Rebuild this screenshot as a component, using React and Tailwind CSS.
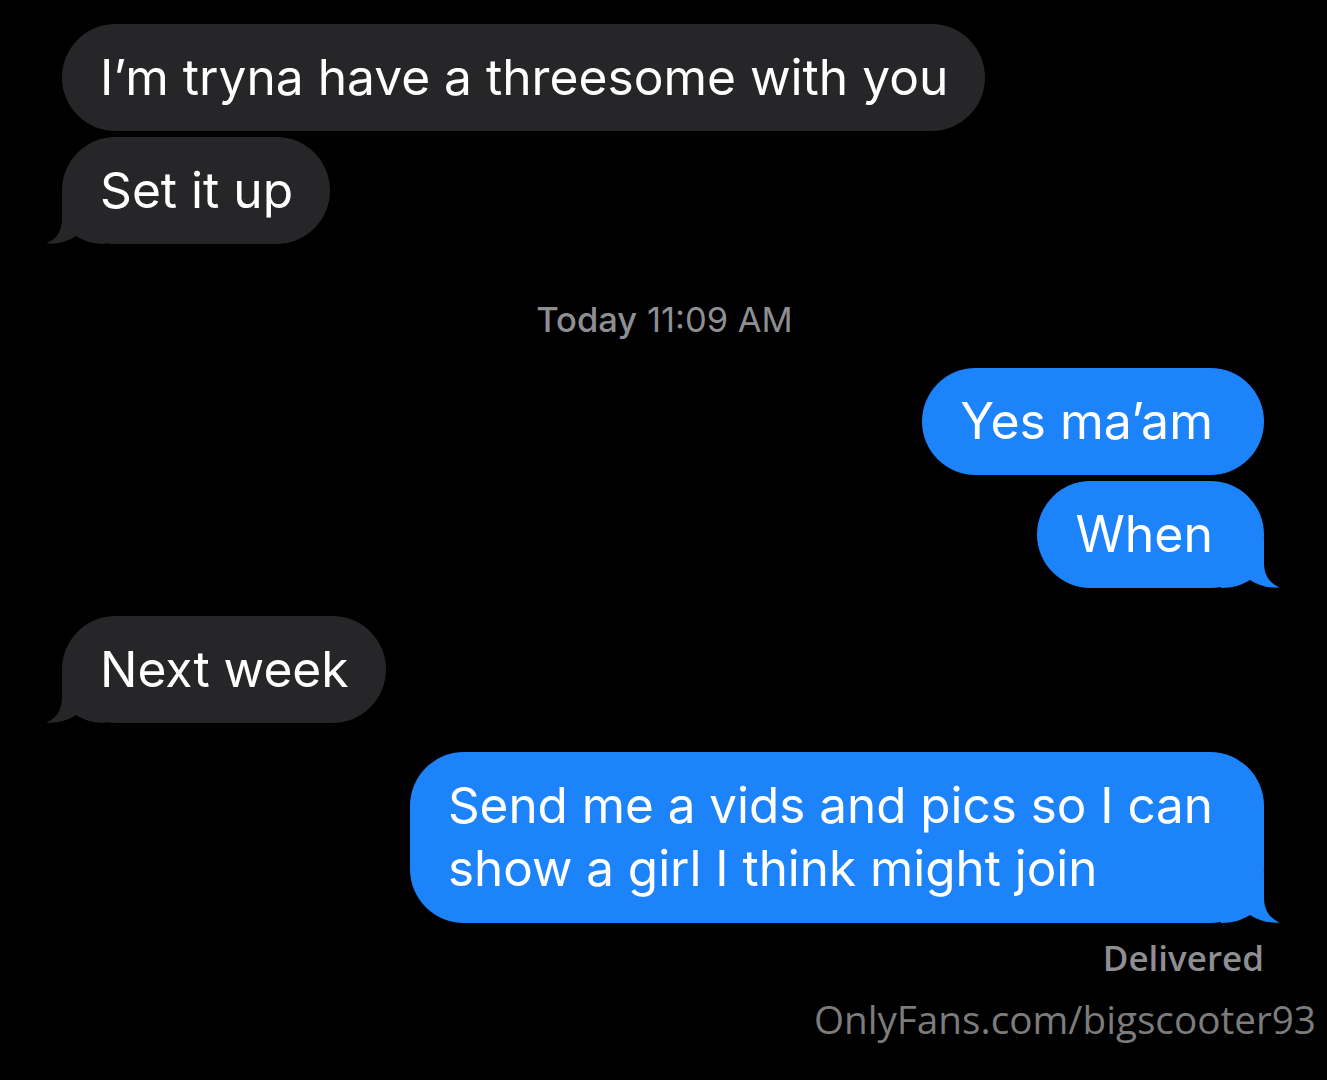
import React from "react";

const SF = { fontFamily: "Inter, 'Noto Sans', sans-serif" };

function TailLeft({ color }) {
  return (
    <svg
      className="absolute left-[-17px] bottom-0"
      width="60"
      height="50"
      viewBox="0 0 60 50"
    >
      <path
        d="M17,0 L17,24 C17,37 12,45 1,49.6 C12,50.4 23,47.5 31,42 C39,47 48,50 60,50 L60,0 Z"
        fill={color}
      />
    </svg>
  );
}

function TailRight({ color }) {
  return (
    <svg
      className="absolute right-[-17px] bottom-0"
      width="60"
      height="50"
      viewBox="0 0 60 50"
      style={{ transform: "scaleX(-1)" }}
    >
      <path
        d="M17,0 L17,24 C17,37 12,45 1,49.6 C12,50.4 23,47.5 31,42 C39,47 48,50 60,50 L60,0 Z"
        fill={color}
      />
    </svg>
  );
}

function Gray({ children, tail, className = "" }) {
  return (
    <div className={"relative self-start " + className}>
      {tail && <TailLeft color="#262628" />}
      <div
        className="relative rounded-[54px] bg-[#262628] text-white pl-[38px] pr-[37px] py-[21px] text-[49.7px] leading-[65px] whitespace-nowrap"
        style={SF}
      >
        {children}
      </div>
    </div>
  );
}

function Blue({ children, tail, className = "", inner = "leading-[65px] py-[21px] text-[50px]" }) {
  return (
    <div className={"relative self-end " + className}>
      {tail && <TailRight color="#1c83fb" />}
      <div
        className={
          "relative rounded-[54px] bg-[#1c83fb] text-white pl-[38px] pr-[51px] whitespace-nowrap " +
          inner
        }
        style={SF}
      >
        {children}
      </div>
    </div>
  );
}

export default function App() {
  return (
    <div className="w-[1327px] h-[1080px] bg-black overflow-hidden flex flex-col pl-[62px] pr-[63px] pt-[24px]">
      <Gray>I’m tryna have a threesome with you</Gray>
      <Gray tail className="mt-[6px]">Set it up</Gray>

      <div
        className="self-center mt-[53px] text-[34.5px] leading-[45px] text-[#8e8e93] ml-[3px]"
        style={SF}
      >
        <span className="font-medium">Today</span> 11:09 AM
      </div>

      <Blue className="mt-[26px]">Yes ma’am</Blue>
      <Blue tail className="mt-[6px]">When</Blue>

      <Gray tail className="mt-[28px]">Next week</Gray>

      <Blue
        tail
        className="mt-[29px]"
        inner="leading-[63px] pt-[22px] pb-[23px] text-[49.4px]"
      >
        Send me a vids and pics so I can
        <br />
        show a girl I think might join
      </Blue>

      <div
        className="self-end mt-[14px] text-[35px] leading-[42px] font-semibold text-[#8e8e93]"
        style={{ fontFamily: "'Open Sans', sans-serif" }}
      >
        Delivered
      </div>
      <div
        className="self-end mr-[-52px] mt-[16px] text-[38.7px] leading-[48px] text-[#7c7c7c]"
        style={{ fontFamily: "'Open Sans', sans-serif" }}
      >
        OnlyFans.com/bigscooter93
      </div>
    </div>
  );
}
